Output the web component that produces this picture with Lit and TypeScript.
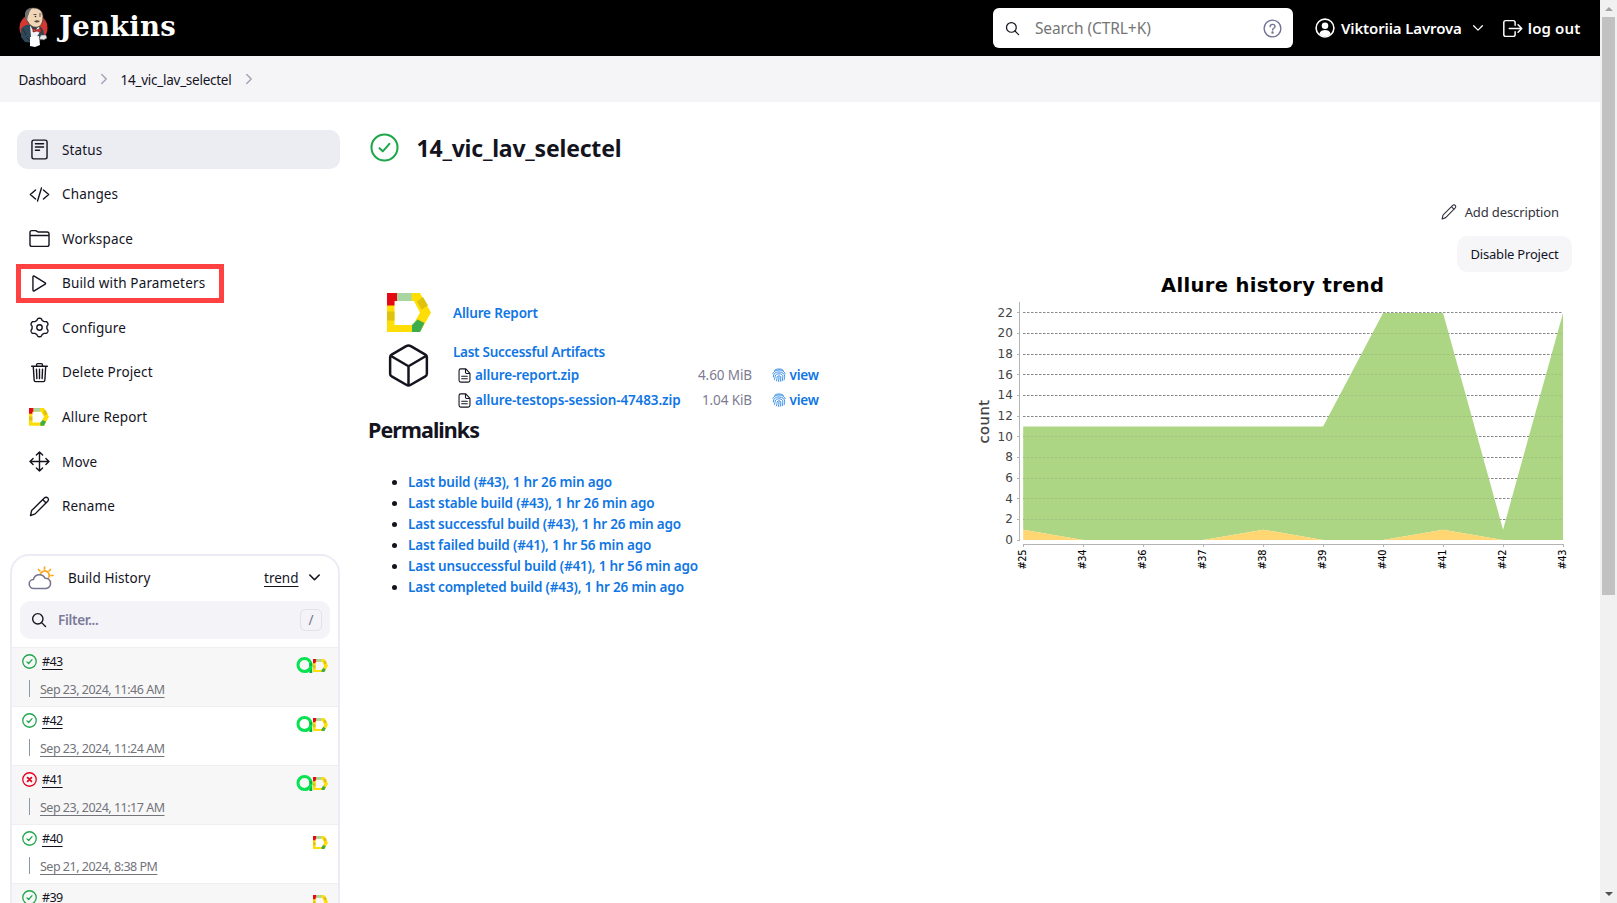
import { LitElement, html, svg, css, nothing } from "lit";
import { customElement, property } from "lit/decorators.js";

const gearPath = (() => {
  const pts: string[] = [];
  for (let i = 0; i < 144; i++) {
    const a = (i / 144) * Math.PI * 2;
    const c = Math.cos(6 * (a + Math.PI / 2));
    const r = 203 + 24 * Math.tanh(1.8 * c);
    pts.push(`${(256 + r * Math.cos(a)).toFixed(1)} ${(256 + r * Math.sin(a)).toFixed(1)}`);
  }
  return "M" + pts.join("L") + "Z";
})();

const glyphs: Record<string, any> = {
  status: svg`<rect x="72" y="28" width="368" height="456" rx="44"/><path d="M156 116h200M156 196h200M156 276h100"/>`,
  changes: svg`<path d="M160 368L32 256l128-112M352 368l128-112-128-112M304 96l-96 320"/>`,
  workspace: svg`<path d="M440 448H72a48 48 0 01-48-48V112a48 48 0 0148-48h84a40 40 0 0122 7l26 18a40 40 0 0022 7H440a48 48 0 0148 48v256a48 48 0 01-48 48zM24 184h464"/>`,
  play: svg`<path d="M96 96v320c0 17 17 28 31 20l268-163c12-7 12-27 0-34L127 76c-14-8-31 3-31 20z"/>`,
  gear: svg`<path d="${gearPath}"/><circle cx="256" cy="256" r="66"/>`,
  trash: svg`<path d="M104 104l22 340c1 20 14 34 34 34h192c20 0 33-14 34-34l22-340M64 104h384M184 104V66a26 26 0 0126-26h92a26 26 0 0126 26v38M256 176v230M182 176l10 230M330 176l-10 230"/>`,
  move: svg`<path d="M180 100l76-76 76 76M256 24v464M180 412l76 76 76-76M412 180l76 76-76 76M100 180l-76 76 76 76M24 256h464"/>`,
  pencil: svg`<path d="M36 478l28-122L374 46c24-24 62-22 82 0s22 56 0 80L150 436zM334 86l84 84"/>`,
  search: svg`<circle cx="218" cy="218" r="166"/><path d="M340 340l124 124"/>`,
  logout: svg`<path d="M320 336v64a48 48 0 01-48 48H92a48 48 0 01-48-48V112a48 48 0 0148-48h180a48 48 0 0148 48v64M392 346l90-90-90-90M176 256h300"/>`,
  chevronDown: svg`<path d="M96 172l160 160 160-160"/>`,
  chevronRight: svg`<path d="M160 60l190 196-190 196"/>`,
  user: svg`<circle cx="256" cy="256" r="228"/><circle cx="256" cy="200" r="84" fill="currentColor" stroke="none"/><path d="M110 400c20-70 90-92 146-92s126 22 146 92c-40 44-90 66-146 66s-106-22-146-66z" fill="currentColor" stroke="none"/>`,
  help: svg`<circle cx="256" cy="256" r="226"/><path d="M192 206c0-40 30-62 66-62s66 22 66 56c0 52-66 48-66 98"/><circle cx="257" cy="364" r="14" fill="currentColor"/>`,
  cube: svg`<path d="M448 341V171a32 32 0 00-16-28L280 54a48 48 0 00-48 0L80 143a32 32 0 00-16 28v170a32 32 0 0016 28l152 88a48 48 0 0048 0l152-88a32 32 0 0016-28zM69 154l187 110 187-110M256 464V264"/>`,
  ok: svg`<circle cx="256" cy="256" r="230"/><path d="M168 268l58 56 116-132"/>`,
  fail: svg`<circle cx="256" cy="256" r="230"/><path d="M190 190l132 132M322 190l-132 132" stroke-width="60"/>`,
  file: svg`<path d="M300 30H130a60 60 0 00-60 60v332a60 60 0 0060 60h252a60 60 0 0060-60V180zM290 36v110a40 40 0 0040 40h106M160 280h192M160 368h192"/>`,
  finger: svg`<path d="M96 84C160 20 350 10 416 90M30 200C80 90 190 76 256 76s180 14 226 130M50 330c0-130 80-186 206-186s206 70 206 160-10 100-20 130M90 420c20-60 20-80 26-120 10-60 60-88 140-88s140 40 140 100-6 110-24 160M160 470c24-60 22-110 30-150 12-44 120-44 132 0 6 60-4 110-22 164M232 490c20-60 26-110 24-160"/>`,
};

@customElement("line-icon")
export class LineIcon extends LitElement {
  @property() name = "";
  @property({ type: Number }) size = 22;
  @property({ type: Number }) weight = 32;
  static styles = css`
    :host { display: inline-flex; flex: none; }
    svg { display: block; fill: none; stroke: currentColor; stroke-linecap: round; stroke-linejoin: round; overflow: visible; }
  `;
  render() {
    return html`<svg width=${this.size} height=${this.size} viewBox="0 0 512 512" stroke-width=${this.weight}>${glyphs[this.name]}</svg>`;
  }
}

@customElement("allure-mark")
export class AllureMark extends LitElement {
  @property({ type: Number }) width = 44;
  static styles = css`
    :host { display: inline-flex; flex: none; }
    svg { display: block; }
  `;
  render() {
    return html`<svg width=${this.width} height=${(this.width * 39) / 44} viewBox="0 0 44 39">
      <path fill="#ffde05" d="M0 0h33l11 19.500L33 39H0zM7.500 8v24H26l7-12.500L27 8z" fill-rule="evenodd"/>
      <path fill="#e50914" d="M0 0h10v8H7.500v4.500H0z"/>
      <path fill="#a8d5a2" d="M10 0h14.500v8H10z"/>
      <path fill="#dfc20e" d="M0 18.500h7.500v9H0zM30 8.500l6-4.500 5 8.500-6.500 4z"/>
      <path fill="#3dad4b" d="M25 32l5.500-5.500 7 3.500-4.500 9H25z"/>
    </svg>`;
  }
}

@customElement("trend-chart")
export class TrendChart extends LitElement {
  static styles = css`
    :host { display: block; }
    svg { display: block; font-family: "DejaVu Sans", sans-serif; }
    .title { font-size: 19.5px; font-weight: 700; fill: #000; }
    .tick { font-size: 12px; fill: #444; }
    .cat { font-size: 9.8px; fill: #000; stroke: #000; stroke-width: .1px; }
    .name { font-size: 14.6px; fill: #404040; stroke: #404040; stroke-width: .25px; }
  `;
  render() {
    const builds = [25, 34, 36, 37, 38, 39, 40, 41, 42, 43];
    const passed = [11, 11, 11, 11, 11, 11, 22, 22, 1, 22];
    const broken = [1, 0, 0, 0, 1, 0, 0, 1, 0, 0];
    const x = (i: number) => 53.2 + i * 59.98;
    const y = (v: number) => 270 - v * 10.32;
    const area = (top: number[], base: number[]) =>
      "M" + top.map((v, i) => `${x(i)} ${y(v)}`).join("L") +
      "L" + base.map((v, i) => `${x(i)} ${y(v)}`).reverse().join("L") + "Z";
    const ticks = Array.from({ length: 12 }, (_, i) => i * 2);
    const line = (v: number) => Math.floor(y(v)) + 0.5;
    return html`<svg width="602" height="310" viewBox="0 0 602 310">
      <text class="title" x="191" y="21.800" textLength="223">Allure history trend</text>
      ${ticks.slice(1).map((v) => svg`<path d="M53 ${line(v)}H593" stroke="#8c8c8c" stroke-dasharray="2.500 1.500"/>`)}
      <path fill="#acd683" d="${area(passed, broken)}"/>
      <path fill="#ffd671" d="${area(broken, broken.map(() => 0))}"/>
      ${ticks.slice(1, -1).map((v) => svg`<path d="M53 ${line(v)}H593" stroke="#777" stroke-opacity=".18" stroke-dasharray="2.500 1.500"/>`)}
      <path d="M49.500 32V270.500M53 274.500H593.500" stroke="#b4b4b4" fill="none"/>
      ${ticks.map((v) => svg`<path d="M47 ${line(v)}h3" stroke="#b4b4b4"/>
        <text class="tick" x="42.800" y="${y(v) + 3.8}" text-anchor="end">${v}</text>`)}
      ${builds.map((b, i) => svg`<path d="M${Math.floor(x(i)) + 0.5} 274v3" stroke="#b4b4b4"/>
        <text class="cat" transform="translate(${x(i) + 3.1} 299.500) rotate(-90)" textLength="20">#${b}</text>`)}
      <text class="name" transform="translate(18.500 173.500) rotate(-90)" textLength="43.500">count</text>
    </svg>`;
  }
}

const tasks: [string, string][] = [
  ["status", "Status"], ["changes", "Changes"], ["workspace", "Workspace"],
  ["play", "Build with Parameters"], ["gear", "Configure"], ["trash", "Delete Project"],
  ["allure", "Allure Report"], ["move", "Move"], ["pencil", "Rename"],
];
const history = [
  { id: "#43", ok: true, ops: true, at: "Sep 23, 2024, 11:46 AM" },
  { id: "#42", ok: true, ops: true, at: "Sep 23, 2024, 11:24 AM" },
  { id: "#41", ok: false, ops: true, at: "Sep 23, 2024, 11:17 AM" },
  { id: "#40", ok: true, ops: false, at: "Sep 21, 2024, 8:38 PM" },
  { id: "#39", ok: true, ops: false, at: "" },
];
const files = [
  { name: "allure-report.zip", size: "4.60 MiB" },
  { name: "allure-testops-session-47483.zip", size: "1.04 KiB" },
];
const permalinks = [
  "Last build (#43), 1 hr 26 min ago",
  "Last stable build (#43), 1 hr 26 min ago",
  "Last successful build (#43), 1 hr 26 min ago",
  "Last failed build (#41), 1 hr 56 min ago",
  "Last unsuccessful build (#41), 1 hr 56 min ago",
  "Last completed build (#43), 1 hr 26 min ago",
];

@customElement("app-root")
export class AppRoot extends LitElement {
  static styles = css`
    :host { display: flex; height: 903px; overflow: hidden; background: #fff; color: #14141f;
      font-family: "Noto Sans", "Open Sans", sans-serif; font-size: 13.5px; line-height: 20px; white-space: nowrap; }
    * { box-sizing: border-box; }
    .page { width: 1600px; height: 903px; overflow: hidden; flex: none; }
    .scroll { width: 17px; background: #f1f1f1; display: flex; flex-direction: column; align-items: center; justify-content: space-between; padding: 7px 0; }
    .scroll .thumb { width: 13px; height: 578px; background: #c1c1c1; margin-top: 6px; margin-bottom: auto; }
    .up, .down { border: 4px solid transparent; width: 8px; height: 4px; }
    .up { border-top: 0; border-bottom: 4px solid #a3a3a3; }
    .down { border-bottom: 0; border-top: 4px solid #505050; }

    header { height: 56px; background: #000; color: #fff; display: flex; align-items: center; padding: 0 19.500px 0 19px; }
    .brand { font: 700 27.5px/40px "DejaVu Serif", serif; letter-spacing: 0.2px; margin: -5px auto 0 10px; }
    .butler { flex: none; display: block; margin-top: -2px; }
    .search { width: 300px; height: 40px; border-radius: 6px; background: #fff; color: #14141f; display: flex; align-items: center; padding: 0 10.500px 0 12.500px; margin-right: 22px; }
    .search span { flex: 1; margin-left: 14.5px; font-size: 15.5px; color: #757575; letter-spacing: -0.08px; }
    .search .help { color: #737397; }
    .user, .logout { display: flex; align-items: center; font-size: 15px; font-weight: 600; letter-spacing: -0.12px; }
    .user { gap: 6px; margin-right: 17px; }
    .user .caret { margin-left: 3px; }
    .logout { gap: 5px; letter-spacing: 0.15px; }

    .crumbs { height: 46px; background: #f5f5f8; display: flex; align-items: center; padding: 2px 0 0 18.500px; color: #14141f; }
    .crumbs span { letter-spacing: -0.26px; }
    .crumbs line-icon { margin: -3px 11px 0 11.500px; color: #a2a2b5; }

    .columns { display: flex; padding-top: 28px; }
    .side { width: 340px; flex: none; }
    .tasks { display: flex; flex-direction: column; gap: 5.6px; margin-left: 17px; width: 323px; }
    .task { position: relative; height: 39px; border-radius: 10px; display: flex; align-items: center; gap: 12px; padding-left: 11px; letter-spacing: 0.15px; }
    .task.active { background: #ececf3; }
    .slot { width: 22px; display: flex; justify-content: center; }
    .mark { position: absolute; left: -1px; top: 0; width: 208px; height: 39px; border: 5px solid #ff4141; }

    .history { margin: 28px 0 0 10px; width: 330px; height: 400px; border: 2px solid #ececf5; border-radius: 19px; overflow: hidden; }
    .history-head { height: 43px; display: flex; align-items: center; padding: 1px 16.500px 0 16px; }
    .history-head .label { margin: 0 auto 0 14px; letter-spacing: 0.08px; }
    .trend { text-decoration: underline; text-underline-offset: 3px; margin-right: 8px; }
    .filter { height: 38px; margin: 2px 8px 8px; border-radius: 10px; background: #f3f3f8; display: flex; align-items: center; padding: 0 8px 0 10.500px; }
    .filter span { flex: 1; margin-left: 11.5px; color: #7b7b98; font-weight: 600; letter-spacing: -0.3px; }
    .filter b { width: 22px; height: 22px; border: 1px solid #e2e2ec; border-radius: 5px; color: #737390; font-weight: 400; text-align: center; line-height: 20px; }
    .run { height: 59px; border-top: 1px solid #efeff2; padding: 4px 10.500px 0 10px; }
    .run:nth-child(odd) { background: #f7f7f7; }
    .run-top { display: flex; align-items: center; height: 20px; font-size: 12.5px; letter-spacing: -0.6px; }
    .run-top .id { margin: 0 auto 0 5px; text-decoration: underline; text-underline-offset: 3px; text-decoration-thickness: 1px; }
    .badges { display: flex; align-items: center; padding-top: 8px; }
    .good { color: #1ea64b; } .bad { color: #e6001f; }
    .run-date { display: flex; align-items: center; margin: 8px 0 0 7px; color: #73737a; font-size: 12.5px; letter-spacing: -0.5px; }
    .run-date i { width: 1px; height: 17px; background: #8d97a5; margin: -3px 10px 0 0; }
    .run-date span { text-decoration: underline; text-underline-offset: 3px; text-decoration-thickness: 1px; }

    .main { width: 1260px; display: grid; grid-template-columns: 602px 602px; padding-left: 28px; align-content: start; }
    .title { grid-column: 1 / 3; display: flex; align-items: center; gap: 18px; height: 36px; margin-left: 1.5px; }
    .title line-icon { margin-top: -1px; }
    h1 { margin: -1px 0 0; font-size: 23px; line-height: 34px; font-weight: 700; letter-spacing: -0.2px; }
    h2 { margin: 3px 0 0; font-size: 21.5px; line-height: 30px; font-weight: 700; letter-spacing: -0.95px; }
    .left { padding-top: 127px; }
    .report { display: grid; grid-template-columns: 44px auto; column-gap: 22px; margin-left: 19px; align-items: center; }
    a { color: #0f76e4; font-weight: 600; letter-spacing: -0.17px; }
    .head { letter-spacing: -0.27px; }
    .artifacts { padding-top: 10px; }
    .file { display: flex; align-items: center; height: 25px; padding-left: 3.500px; }
    .file line-icon { margin-top: 2px; }
    .file a.name { width: 209px; margin-left: 3.5px; letter-spacing: -0.12px; }
    .file em { width: 68px; text-align: right; font-style: normal; color: #7c7c92; letter-spacing: -0.1px; }
    .file line-icon.print { color: #0f76e4; margin: 1px 4px 0 19.500px; }
    .cube { align-self: start; margin: 8.5px 0 0 -3px; }
    ul { margin: 26.5px 0 0; padding: 0 0 0 40px; }
    li { height: 21px; line-height: 21px; }
    .right { padding-top: 36px; display: flex; flex-direction: column; align-items: flex-end; }
    .add { display: flex; align-items: center; gap: 8px; height: 20px; margin-right: 13px; color: #33333e; font-size: 13px; letter-spacing: -0.12px; }
    .disable { height: 36px; margin-top: 14px; width: 115px; border-radius: 10px; background: #f6f6f9; display: flex; align-items: center; justify-content: center; font-size: 13px; letter-spacing: -0.2px; }
    trend-chart { margin-top: -2px; align-self: flex-end; }
  `;

  butler() {
    return html`<svg class="butler" width="30" height="40" viewBox="0 0 30 40">
      <ellipse cx="14.500" cy="21" rx="14" ry="14" fill="#d33833"/>
      <path d="M2 22c3-4 6-4.500 9-4l8 1c5 1 6 5 6 9l-3 5-6 3-10-1-4-5z" fill="#2f4858"/>
      <path d="M11 18l4 7 5-6 1 6-4 6-5-1z" fill="#f2f4f5"/>
      <path d="M14 21l4 2 4-2v5l-4-2-4 1z" fill="#d33833" stroke="#5c1513" stroke-width=".6"/>
      <path d="M7 6c1-4 5-5.500 9-5 5 .6 8 4 8 8.500 0 5-1 9-5 10.500-4 1-8-1-10-5-2-2-3-6-2-9z" fill="#f0d6b7" stroke="#3b3430" stroke-width=".8"/>
      <path d="M13 1C8 1 6 4 6 8c0 2 0 4 2 6l1-5c1-1 1-4 2-5z" fill="#72706f"/>
      <path d="M14.500 7.500h3M20 7h2.500" stroke="#3b3430" stroke-width=".8"/>
      <circle cx="16.500" cy="9.500" r=".8" fill="#222"/><circle cx="21" cy="9" r=".7" fill="#222"/>
      <path d="M15 14.500c2-1.500 3-1.500 6-.5-2 2-4 2-6 .5z" fill="#5d4b3e"/>
      <path d="M11 30l9-1 1 9-5 2-5-1z" fill="#fff"/>
      <path d="M22 28l5 0 1 3-3 2-5-1z" fill="#e6e6e6" stroke="#444" stroke-width=".5"/>
      <path d="M4 22l3 6M7 30l4 4" stroke="#17262f" stroke-width=".8"/>
    </svg>`;
  }

  weather() {
    return html`<svg width="26" height="24" viewBox="0 0 26 24" fill="none" stroke-linecap="round" stroke-linejoin="round">
      <path d="M12.500 7.500a4.600 4.600 0 1 1 6.500 6M16.500 1v2M10.500 3.500l1.300 1.300M22.500 3.500l-1.300 1.300M25 9.500h-2M22.500 15.500l-1-1" stroke="#fda61f" stroke-width="1.700"/>
      <path d="M6 22.500a4.500 4.500 0 0 1-.6-9A6.200 6.200 0 0 1 17 12.200a5.200 5.200 0 0 1 1.300 10.300z" stroke="#75758f" stroke-width="1.600" fill="#fff"/>
    </svg>`;
  }

  ops() {
    return html`<svg width="17" height="17" viewBox="0 0 17 17" fill="none">
      <circle cx="8.500" cy="8" r="6.500" stroke="#05e350" stroke-width="3"/>
      <path d="M14.800 6v10" stroke="#04b544" stroke-width="2.800"/>
      <path d="M14.800 9c0 3-3 5.500-6 5.500" stroke="#05e350" stroke-width="3"/>
    </svg>`;
  }

  render() {
    return html`
      <div class="page">
        <header>
          ${this.butler()}
          <div class="brand">Jenkins</div>
          <div class="search">
            <line-icon name="search" size="15" weight="42"></line-icon>
            <span>Search (CTRL+K)</span>
            <line-icon class="help" name="help" size="19" weight="38"></line-icon>
          </div>
          <div class="user">
            <line-icon name="user" size="20" weight="40"></line-icon>
            <span>Viktoriia Lavrova</span>
            <line-icon class="caret" name="chevronDown" size="14" weight="46"></line-icon>
          </div>
          <div class="logout">
            <line-icon name="logout" size="21" weight="36"></line-icon><span>log out</span>
          </div>
        </header>
        <nav class="crumbs">
          <span>Dashboard</span><line-icon name="chevronRight" size="12" weight="60"></line-icon>
          <span>14_vic_lav_selectel</span><line-icon name="chevronRight" size="12" weight="60"></line-icon>
        </nav>
        <div class="columns">
          <aside class="side">
            <div class="tasks">
              ${tasks.map(([icon, label], i) => html`
                <div class="task ${i === 0 ? "active" : ""}">
                  <div class="slot">${icon === "allure"
                    ? html`<allure-mark width="20"></allure-mark>`
                    : html`<line-icon name=${icon} size="21" weight="34"></line-icon>`}</div>
                  <span>${label}</span>
                  ${icon === "play" ? html`<div class="mark"></div>` : nothing}
                </div>`)}
            </div>
            <section class="history">
              <div class="history-head">
                ${this.weather()}<span class="label">Build History</span>
                <span class="trend">trend</span>
                <line-icon name="chevronDown" size="15" weight="56"></line-icon>
              </div>
              <div class="filter">
                <line-icon name="search" size="16" weight="44"></line-icon><span>Filter...</span><b>/</b>
              </div>
              <div class="runs">
                ${history.map((r) => html`
                  <div class="run">
                    <div class="run-top">
                      <line-icon class=${r.ok ? "good" : "bad"} name=${r.ok ? "ok" : "fail"} size="15" weight="44"></line-icon>
                      <span class="id">${r.id}</span>
                      <div class="badges">${r.ops ? this.ops() : nothing}<allure-mark width="15"></allure-mark></div>
                    </div>
                    ${r.at ? html`<div class="run-date"><i></i><span>${r.at}</span></div>` : nothing}
                  </div>`)}
              </div>
            </section>
          </aside>
          <main class="main">
            <div class="title">
              <line-icon class="good" name="ok" size="29" weight="36"></line-icon>
              <h1>14_vic_lav_selectel</h1>
            </div>
            <div class="left">
              <div class="report">
                <allure-mark width="44"></allure-mark><a>Allure Report</a>
                <line-icon class="cube" name="cube" size="49" weight="26"></line-icon>
                <div class="artifacts">
                  <a class="head">Last Successful Artifacts</a>
                  ${files.map((f) => html`<div class="file">
                    <line-icon name="file" size="15" weight="38"></line-icon>
                    <a class="name">${f.name}</a><em>${f.size}</em>
                    <line-icon class="print" name="finger" size="14" weight="30"></line-icon><a>view</a>
                  </div>`)}
                </div>
              </div>
              <h2>Permalinks</h2>
              <ul>${permalinks.map((p) => html`<li><a>${p}</a></li>`)}</ul>
            </div>
            <div class="right">
              <div class="add"><line-icon name="pencil" size="16" weight="36"></line-icon>Add description</div>
              <div class="disable">Disable Project</div>
              <trend-chart></trend-chart>
            </div>
          </main>
        </div>
      </div>
      <div class="scroll"><div class="up"></div><div class="thumb"></div><div class="down"></div></div>
    `;
  }
}
